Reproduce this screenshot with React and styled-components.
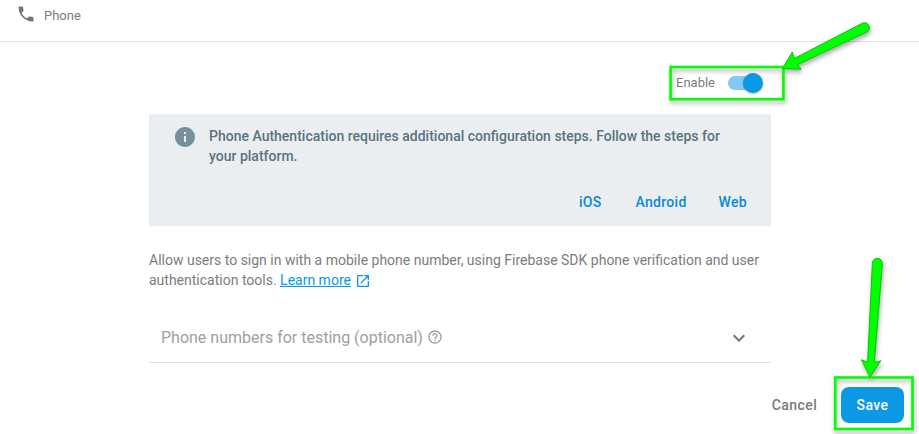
import React from "react";
import styled, { createGlobalStyle } from "styled-components";

const GlobalStyle = createGlobalStyle`
  * { box-sizing: border-box; }
  body { margin: 0; background: #fff; font-family: Roboto, "Liberation Sans", sans-serif; }
  button { font-family: inherit; border: 0; background: none; padding: 0; }
`;

const Page = styled.div`
  position: relative;
  width: 919px;
  height: 434px;
  overflow: hidden;
  background: #fff;
`;

const Header = styled.header`
  display: flex;
  align-items: center;
  height: 42px;
  padding: 0 0 11px 16px;
  border-bottom: 1px solid #e0e0e0;
  color: #7c7c7c;

  svg { margin-top: -2px; }
`;

const Provider = styled.span`
  margin-left: 8px;
  padding-top: 2px;
  font-size: 13px;
  line-height: 20px;
`;

const Content = styled.main`
  width: 622px;
  margin-left: 149px;
`;

const EnableRow = styled.div`
  display: flex;
  align-items: center;
  justify-content: flex-end;
  height: 72px;
  padding: 10px 8px 0 0;
  color: #7c7c7c;
`;

const EnableLabel = styled.span`
  margin-right: 13px;
  font-size: 13px;
  line-height: 20px;
`;

const Track = styled.span`
  display: flex;
  align-items: center;
  justify-content: flex-end;
  width: 35px;
  height: 14px;
  border-radius: 7px;
  background: linear-gradient(90deg, #81caf3 0 28px, transparent 28px);
`;

const Thumb = styled.span`
  width: 20px;
  height: 20px;
  flex: none;
  border-radius: 50%;
  background: #0b99e6;
  box-shadow: 0 1px 2px rgba(0, 0, 0, 0.3);
`;

const Banner = styled.section`
  display: flex;
  flex-direction: column;
  justify-content: space-between;
  height: 112px;
  padding: 12px 24px 14px;
  background: #eaeef1;
`;

const Notice = styled.div`
  display: flex;
  align-items: flex-start;
  color: #5a737f;

  svg { flex: none; margin-right: 12px; margin-top: -1px; }
`;

const NoticeText = styled.p`
  margin: 0;
  font-size: 14px;
  font-weight: 500;
  line-height: 20px;
`;

const Platforms = styled.nav`
  display: flex;
  justify-content: flex-end;
  gap: 32px;
`;

const PlatformLink = styled.a`
  color: #078ad6;
  font-size: 14px;
  font-weight: 500;
  line-height: 20px;
  letter-spacing: 0.3px;

  &:first-child { margin-right: 2px; }
`;

const Description = styled.p`
  margin: 24px 0 0;
  color: #7c7c7c;
  font-size: 14px;
  line-height: 20px;
  white-space: nowrap;

  svg { vertical-align: -4px; margin-left: 4px; }
`;

const LearnMore = styled.a`
  color: #039be5;
  text-decoration: underline;
`;

const TestingRow = styled.div`
  display: flex;
  align-items: center;
  height: 49px;
  margin-top: 24px;
  padding: 0 20px 1px 12px;
  border-bottom: 1px solid #e0e0e0;
  color: #a0a0a0;
`;

const TestingLabel = styled.span`
  display: flex;
  align-items: center;
  gap: 4px;
  font-size: 16px;
  line-height: 24px;

  svg { margin-bottom: 2px; }
`;

const Spacer = styled.span`
  flex: 1;
`;

const Actions = styled.footer`
  display: flex;
  align-items: center;
  justify-content: flex-end;
  margin-top: 24px;
  padding-right: 15px;
`;

const ActionButton = styled.button`
  width: ${(p) => (p.$primary ? "63px" : "77px")};
  height: 36px;
  margin-left: 8px;
  border-radius: 8px;
  background: ${(p) => (p.$primary ? "#0b99e6" : "transparent")};
  color: ${(p) => (p.$primary ? "#fff" : "#7a7a7a")};
  font-size: 14px;
  font-weight: 500;
  letter-spacing: 0.45px;
`;

const Annotations = styled.svg`
  position: absolute;
  inset: 0;
  pointer-events: none;
  filter: drop-shadow(1px 3px 2px rgba(0, 0, 0, 0.32));
`;

const Icon = ({ size, color, d }) => (
  <svg width={size} height={size} viewBox="0 0 24 24" fill={color}>
    <path d={d} />
  </svg>
);

const PHONE = "M6.62 10.79c1.44 2.83 3.76 5.14 6.59 6.59l2.2-2.2c.27-.27.67-.36 1.02-.24 1.12.37 2.33.57 3.57.57.55 0 1 .45 1 1V20c0 .55-.45 1-1 1-9.39 0-17-7.61-17-17 0-.55.45-1 1-1h3.5c.55 0 1 .45 1 1 0 1.25.2 2.45.57 3.57.11.35.03.74-.25 1.02l-2.2 2.2z";
const INFO = "M12 2C6.48 2 2 6.48 2 12s4.48 10 10 10 10-4.48 10-10S17.52 2 12 2zm1 15h-2v-6h2v6zm0-8h-2V7h2v2z";
const OPEN = "M19 19H5V5h7V3H5c-1.11 0-2 .9-2 2v14c0 1.1.89 2 2 2h14c1.1 0 2-.9 2-2v-7h-2v7zM14 3v2h3.59l-9.83 9.83 1.41 1.41L19 6.41V10h2V3h-7z";
const HELP = "M11 18h2v-2h-2v2zm1-16C6.48 2 2 6.48 2 12s4.48 10 10 10 10-4.48 10-10S17.52 2 12 2zm0 18c-4.41 0-8-3.59-8-8s3.59-8 8-8 8 3.59 8 8-3.59 8-8 8zm0-14c-2.21 0-4 1.79-4 4h2c0-1.1.9-2 2-2s2 .9 2 2c0 2-3 1.75-3 5h2c0-2.25 3-2.5 3-5 0-2.21-1.79-4-4-4z";
const CHEVRON = "M7.41 8.59L12 13.17l4.59-4.58L18 10l-6 6-6-6 1.41-1.41z";

export default function App() {
  return (
    <>
      <GlobalStyle />
      <Page>
        <Header>
          <Icon size={20} color="#757575" d={PHONE} />
          <Provider>Phone</Provider>
        </Header>
        <Content>
          <EnableRow>
            <EnableLabel>Enable</EnableLabel>
            <Track role="switch" aria-checked="true"><Thumb /></Track>
          </EnableRow>
          <Banner>
            <Notice>
              <Icon size={24} color="#78909c" d={INFO} />
              <NoticeText>
                Phone Authentication requires additional configuration steps. Follow the steps for
                <br />
                your platform.
              </NoticeText>
            </Notice>
            <Platforms>
              <PlatformLink>iOS</PlatformLink>
              <PlatformLink>Android</PlatformLink>
              <PlatformLink>Web</PlatformLink>
            </Platforms>
          </Banner>
          <Description>
            Allow users to sign in with a mobile phone number, using Firebase SDK phone verification and user
            <br />
            authentication tools. <LearnMore>Learn more</LearnMore>
            <Icon size={16} color="#039be5" d={OPEN} />
          </Description>
          <TestingRow>
            <TestingLabel>
              Phone numbers for testing (optional)
              <Icon size={16} color="#9e9e9e" d={HELP} />
            </TestingLabel>
            <Spacer />
            <Icon size={24} color="#757575" d={CHEVRON} />
          </TestingRow>
        </Content>
        <Actions>
          <ActionButton>Cancel</ActionButton>
          <ActionButton $primary>Save</ActionButton>
        </Actions>
        <Annotations width="919" height="434" viewBox="0 0 919 434">
          <g fill="none" stroke="#00ff00" strokeWidth="2.6">
            <rect x="670.6" y="67" width="112.8" height="32.2" />
            <rect x="835.2" y="377.5" width="77.3" height="51.5" />
          </g>
          <g fill="#00ff00" stroke="#00c800" strokeWidth="1" strokeLinejoin="round">
            <path d="M782.5 68.5L792.3 52L794.4 58.4L862.8 23A5 5 0 0 1 867.6 31.6L797.6 64.5L801 69.2Z" />
            <path d="M870 377L861.4 359.8L867.6 362.1L872.4 263A5 5 0 0 1 882.4 263.5L874.3 362.4L880.8 360.8Z" />
          </g>
        </Annotations>
      </Page>
    </>
  );
}
